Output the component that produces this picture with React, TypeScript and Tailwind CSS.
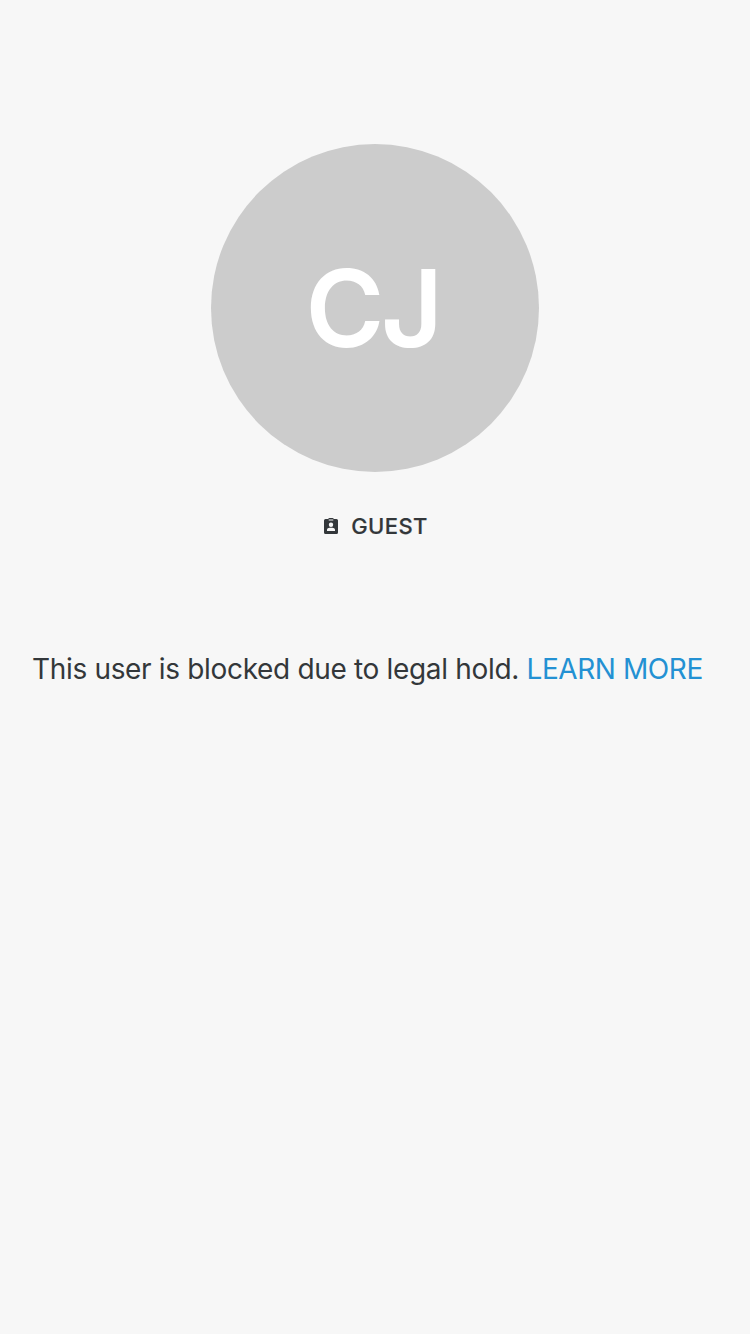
export default function App() {
  return (
    <main className="flex h-[1334px] w-[750px] flex-col items-center bg-[#f7f7f7] pt-36 font-['Inter',sans-serif] text-[#33373a]">
      <div className="flex size-[328px] items-center justify-center rounded-full bg-[#cccccc]">
        <span className="-ml-[5px] pt-px text-[107px] leading-none font-semibold tracking-[-3.5px] text-white">CJ</span>
      </div>
      <div className="mt-10 flex h-7 items-center gap-[13px] pl-0.5">
        <svg width="14" height="16" viewBox="0 0 14 16" aria-hidden="true">
          <path
            fill="#33373a"
            fillRule="evenodd"
            d="M1.500 1H4.200Q4.500 0 5.500 0h3Q9.500 0 9.800 1h2.700A1.500 1.500 0 0 1 14 2.500v12a1.500 1.500 0 0 1-1.500 1.500h-11A1.500 1.500 0 0 1 0 14.500v-12A1.500 1.500 0 0 1 1.500 1zM4.700 1.500v1h4.600v-1zM7 4.500a2.200 2.200 0 1 0 0 4.400 2.200 2.200 0 0 0 0-4.400zM3 13h8v-1.300c0-1.100-1.300-1.700-2.700-1.900H5.700C4.300 10 3 10.600 3 11.700z"
          />
        </svg>
        <span className="text-[22px] leading-7 font-medium tracking-[0.4px] [-webkit-text-stroke:0.2px_#33373a]">GUEST</span>
      </div>
      <p className="mt-[110px] w-full pl-8 text-[28px] leading-[38px] tracking-[-0.33px] whitespace-pre">
        This user is blocked due to legal hold. <a className="tracking-[-0.42px] text-[#2391d3]">LEARN MORE</a>
      </p>
    </main>
  );
}
